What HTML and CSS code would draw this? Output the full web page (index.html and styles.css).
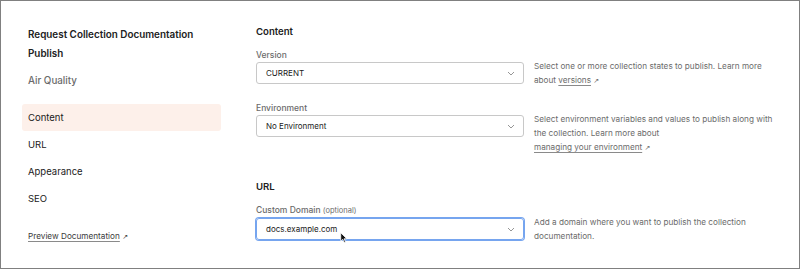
FILE: index.html
```html
<!DOCTYPE html>
<html lang="en">
    <head>
        <meta charset="UTF-8" />
        <meta name="viewport" content="width=device-width, initial-scale=1.0" />
        <link rel="stylesheet" href="styles.css">
        <title>Publish Documentation</title>
    </head>
    <body>
        <div class="frame">
            <aside class="sidebar">
                <h1 class="sidebar__title">Request Collection Documentation Publish</h1>
                <p class="sidebar__collection">Air Quality</p>

                <nav class="nav">
                    <a class="nav__item nav__item--active">Content</a>
                    <a class="nav__item">URL</a>
                    <a class="nav__item">Appearance</a>
                    <a class="nav__item">SEO</a>
                </nav>

                <a class="sidebar__preview"><span class="link">Preview Documentation</span> <span class="arrow">↗</span></a>
            </aside>

            <main class="main">
                <section class="section">
                    <h2 class="section__title">Content</h2>

                    <div class="field">
                        <label class="field__label">Version</label>
                        <div class="select">
                            <span>CURRENT</span>
                            <svg class="select__chevron" width="8" height="5" viewBox="0 0 8 5"><path d="M1 1l3 3 3-3" fill="none" stroke="#8a8a8a" stroke-width="0.9"/></svg>
                        </div>
                        <p class="field__help">Select one or more collection states to publish. Learn more<br>about <span class="link">versions</span> <span class="arrow">↗</span></p>
                    </div>

                    <div class="field">
                        <label class="field__label">Environment</label>
                        <div class="select">
                            <span>No Environment</span>
                            <svg class="select__chevron" width="8" height="5" viewBox="0 0 8 5"><path d="M1 1l3 3 3-3" fill="none" stroke="#8a8a8a" stroke-width="0.9"/></svg>
                        </div>
                        <p class="field__help">Select environment variables and values to publish along with<br>the collection. Learn more about<br><span class="link">managing your environment</span> <span class="arrow">↗</span></p>
                    </div>
                </section>

                <section class="section">
                    <h2 class="section__title">URL</h2>

                    <div class="field">
                        <label class="field__label">Custom Domain <span class="field__optional">(optional)</span></label>
                        <div class="select select--focus">
                            <span class="select__value">docs.example.com</span>
                            <svg class="select__chevron" width="8" height="5" viewBox="0 0 8 5"><path d="M1 1l3 3 3-3" fill="none" stroke="#8a8a8a" stroke-width="0.9"/></svg>
                            <svg class="cursor" width="8" height="11.5" viewBox="0 0 9 13"><path d="M0.8 0.8v9.6l2.3-2.1 1.6 3.6 1.5-0.7-1.6-3.5h3.1z" fill="#111" stroke="#fff" stroke-width="0.9" stroke-linejoin="round"/></svg>
                        </div>
                        <p class="field__help">Add a domain where you want to publish the collection<br>documentation.</p>
                    </div>
                </section>
            </main>
        </div>
    </body>
</html>
```

FILE: styles.css
```css
*,
*::before,
*::after {
    box-sizing: border-box;
}

body,
h1,
h2,
p {
    margin: 0;
}

body {
    font-family: Inter, 'Noto Sans', sans-serif;
    color: #212121;
    background: #fff;
}

.frame {
    display: flex;
    width: 800px;
    height: 269px;
    border: 1px solid #808080;
    overflow: hidden;
}

/* sidebar */

.sidebar {
    width: 239px;
    flex-shrink: 0;
    padding: 24px 19px 0 21px;
}

.sidebar__title {
    padding: 0 6px;
    font-size: 9.9px;
    font-weight: 600;
    line-height: 19px;
}

.sidebar__collection {
    margin-top: 8px;
    padding: 0 6px;
    font-size: 9.8px;
    font-weight: 500;
    line-height: 19px;
    color: #6b6b6b;
}

.nav {
    display: flex;
    flex-direction: column;
    margin-top: 14px;
}

.nav__item {
    height: 27px;
    padding: 0 6px;
    display: flex;
    align-items: center;
    font-size: 9.5px;
    color: #212121;
    border-radius: 3px;
}

.nav__item--active {
    background: #fdf0ea;
}

.sidebar__preview {
    display: block;
    margin-top: 16px;
    padding: 0 6px;
    font-size: 8.2px;
    line-height: 16px;
    color: #3b3b3b;
}

.link {
    text-decoration: underline;
    text-decoration-color: #8a8a8a;
    text-underline-offset: 2px;
}

.arrow {
    font-family: 'DejaVu Sans', sans-serif;
    font-size: 7px;
    line-height: 1;
}

/* main */

.main {
    flex: 1;
    padding: 23px 0 0 16px;
}

.section + .section {
    margin-top: 25px;
}

.section__title {
    font-size: 9.6px;
    font-weight: 600;
    line-height: 16px;
}

.field {
    display: grid;
    grid-template-columns: 268px 1fr;
    column-gap: 10px;
    margin-top: 8px;
}

.field + .field {
    margin-top: 14px;
}

.field__label {
    grid-column: 1;
    font-size: 8.5px;
    font-weight: 500;
    line-height: 14px;
    color: #6b6b6b;
}

.field__optional {
    font-size: 7.5px;
    font-weight: 400;
}

.select {
    position: relative;
    grid-column: 1;
    height: 22px;
    padding: 0 9px;
    display: flex;
    align-items: center;
    justify-content: space-between;
    border: 1px solid #c8c8c8;
    border-radius: 3px;
    font-size: 8px;
    color: #212121;
}

.select--focus {
    border-color: #76a5ef;
    box-shadow: 0 0 0 1px #76a5ef;
}

.select__chevron {
    margin-right: -1px;
}

.cursor {
    position: absolute;
    left: 83px;
    top: 13px;
}

.field__help {
    grid-column: 2;
    grid-row: 2;
    margin-top: -3px;
    font-size: 8.2px;
    line-height: 14px;
    color: #6b6b6b;
    white-space: nowrap;
}
```
